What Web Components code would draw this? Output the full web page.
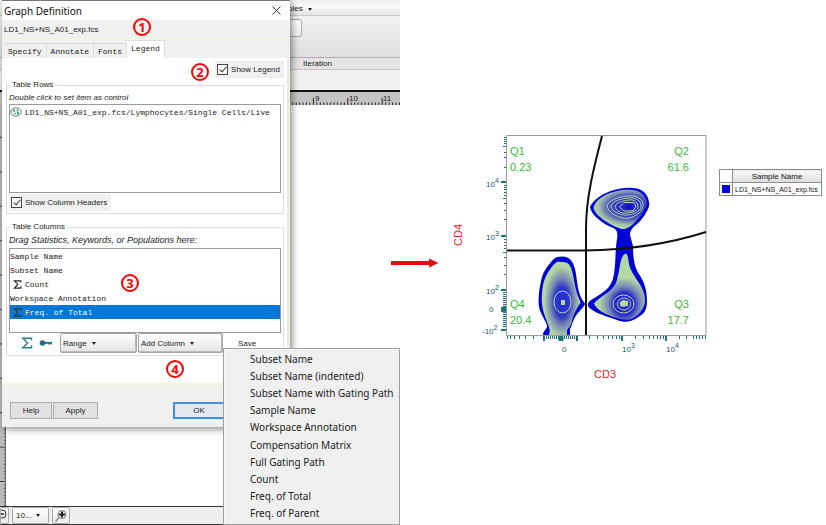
<!DOCTYPE html>
<html lang="en">
<head>
<meta charset="utf-8">
<title>Graph Definition</title>
<style>
body{margin:0;background:#fff;color:#222;font-family:"Liberation Sans",Arial,sans-serif;font-size:8px}
</style>
</head>
<body>
<legend-tutorial></legend-tutorial>
<script>
const define = (name, html, setup) => {
  const t = document.createElement('template');
  t.innerHTML = '<style>*{box-sizing:border-box}</style>' + html;
  customElements.define(name, class extends HTMLElement {
    connectedCallback() {
      if (this.shadowRoot) return;
      this.attachShadow({mode: 'open'}).append(t.content.cloneNode(true));
      if (setup) setup(this.shadowRoot, this);
    }
  });
};
const range = (n, f) => Array.from({length: n}, (_, i) => f(i));

/* Red circled step number */
define('step-badge', `<style>
:host{position:absolute;width:18px;height:18px;border:2px solid #f00;border-radius:50%;display:grid;place-items:center;color:#f00;font:bold 13px/14px "Open Sans","Noto Sans",sans-serif}
</style><slot></slot>`);

define('check-box', `<style>
:host{display:flex;background:#f0f0f0;width:max-content}
label{display:flex;align-items:center;gap:3px;padding:3px 4px 3px 2px;line-height:11px;font-size:8px}
input{appearance:none;margin:0;width:11px;height:11px;border:1px solid #444;background:#fff;display:grid;place-items:center}
input:checked::after{content:"";width:3px;height:6px;border:solid #333;border-width:0 1px 1px 0;transform:rotate(40deg);margin-bottom:2px}
</style><label><input type="checkbox" checked><slot></slot></label>`);

define('push-button', `<style>
:host{display:block}
button{width:100%;height:17px;padding:0;border:1px solid #adadad;background:#e1e1e1;font:inherit;font-size:8px;color:#222}
:host([primary]) button{border:2px solid #3b93dc;background:#e3e8ef}
</style><button type="button"><slot></slot></button>`);

define('drop-button', `<style>
:host{display:block}
button{display:flex;align-items:center;gap:5px;width:100%;height:20px;padding:0 2px;border:1px solid #a3a3a3;border-radius:2px;background:linear-gradient(#fff,#e4e4e4);box-shadow:inset -1px -1px #bbb;font:inherit;font-size:8px;color:#222}
i{border:2px solid transparent;border-top:3px solid #222;border-bottom:0}
</style><button type="button" aria-haspopup="menu"><slot></slot><i></i></button>`);

define('tab-bar', `<style>
:host{display:flex;align-items:flex-end;height:18px;padding-left:2px;background:#f0f0f0;font-family:"Liberation Mono",monospace}
button{height:15px;padding:0 4px;border:1px solid #dcdcdc;border-bottom:0;border-left:0;background:#f0f0f0;font:inherit;font-size:8px;color:#222}
button[aria-selected=true]{height:18px;padding:0 4px 2px;background:#fff}
</style>
<button role="tab" type="button">Specify</button><button role="tab" type="button">Annotate</button><button role="tab" type="button">Fonts</button><button role="tab" type="button" aria-selected="true">Legend</button>`);

define('group-box', `<style>
:host{display:block}
fieldset{min-width:0;margin:0;padding:0 2px 2px;border:1px solid #dcdcdc}
legend{margin-left:1px;padding:0 2px;line-height:12px;font-size:8px}
</style><fieldset><legend></legend><slot></slot></fieldset>`,
(r, h) => { r.querySelector('legend').textContent = h.getAttribute('heading'); });

define('item-list', `<style>
:host{display:block;border:1px solid #9a9aa2;font-family:"Liberation Mono",monospace;font-size:8px}
::slotted(div){display:flex;align-items:center;gap:3px;min-height:14px;line-height:13px;white-space:nowrap}
::slotted(.on){background:#0078d7;color:#fff}
</style><slot></slot>`);

define('context-menu', `<style>
:host{display:flex;flex-direction:column;background:#f0f0f0;border:1px solid #a0a0a0;padding:1px 0 2px;box-shadow:inset 1px 1px #f8f8f8}
button{flex:1;border:0;background:none;padding:0 0 0 26px;text-align:left;font:10px/14px "Noto Sans","Open Sans",sans-serif;color:#1a1a1a;white-space:nowrap}
</style>`, r => {
  for (const s of ['Subset Name','Subset Name (indented)','Subset Name with Gating Path','Sample Name','Workspace Annotation','Compensation Matrix','Full Gating Path','Count','Freq. of Total','Freq. of Parent']) {
    const b = document.createElement('button');
    b.type = 'button'; b.setAttribute('role', 'menuitem'); b.textContent = s; r.append(b);
  }
});

const sigma = (c, s) => `<svg width="${s}" height="${s}" viewBox="0 0 10 10" fill="none" stroke="${c}"><path d="M8.7 2.8V1H1.6L5.4 5 1.5 9H8.8V7" stroke-width="1.2"/></svg>`;

define('graph-dialog', `<style>
:host{display:flex;flex-direction:column;background:#f0f0f0;border-top:1px solid #777;box-shadow:2px 2px 7px #0007}
header{display:flex;align-items:center;justify-content:space-between;height:19px;padding:0 9px 0 2px;background:#fff;font:10px/18px "Noto Sans","Open Sans",sans-serif;color:#111}
header button{border:0;background:none;padding:0;display:flex}
h1{font:inherit;margin:0}
.file{height:20px;padding-left:2px;line-height:20px;border-bottom:1px solid #f7f7dc}
.pane{background:#fff;padding:3px 3px 0 4px;border-right:3px solid #ecece0;height:327px;border-bottom:2px solid #f5f5dc}
.show{display:flex;justify-content:flex-end}
p{margin:0;font-style:italic;line-height:13px}
p.big{font-size:9px;line-height:15px}
.rows{height:89px}
.cols{height:85px}
group-box{margin-top:1px}
group-box+group-box{margin-top:7px}
.tools{display:flex;align-items:center;height:20px;padding-left:12px}
.tools>svg{flex:none}
.tools drop-button:first-of-type{width:77px;margin-left:7px;margin-right:1px}
.tools drop-button:last-of-type{width:85px}
.key{margin-left:6px}
.save{border:0;background:none;font:inherit;padding:0;margin-left:15px;color:#222}
footer{display:flex;gap:1px;padding:17px 8px 8px}
.help{width:42px}.apply{width:45px}.ok{width:52px;margin-left:auto;margin-right:57px}
</style>
<header><h1>Graph Definition</h1><button type="button" aria-label="Close"><svg width="9" height="9" viewBox="0 0 9 9" stroke="#222" stroke-width=".9"><path d="M.5.5l8 8M8.500.5l-8 8"/></svg></button></header>
<div class="file">LD1_NS+NS_A01_exp.fcs</div>
<tab-bar role="tablist"></tab-bar>
<div class="pane">
  <div class="show"><check-box>Show Legend</check-box></div>
  <group-box heading="Table Rows">
    <p>Double click to set item as control</p>
    <item-list class="rows"><div><svg width="12" height="10" viewBox="0 0 12 10"><ellipse cx="6" cy="5" rx="5.300" ry="4.200" fill="#eef5f1" stroke="#536b64" stroke-width=".8"/><g fill="#2f9a6c"><circle cx="4" cy="3.700" r="1.100"/><circle cx="7.500" cy="3.500" r="1"/><circle cx="8" cy="6.300" r="1.200"/><circle cx="5" cy="6.500" r=".8"/></g></svg>LD1_NS+NS_A01_exp.fcs/Lymphocytes/Single Cells/Live</div></item-list>
    <check-box style="margin-top:1px">Show Column Headers</check-box>
  </group-box>
  <group-box heading="Table Columns">
    <p class="big">Drag Statistics, Keywords, or Populations here:</p>
    <item-list class="cols"><div>Sample Name</div><div>Subset Name</div><div style="padding-left:3px">${sigma('#222', 9)}Count</div><div>Workspace Annotation</div><div class="on" style="padding-left:3px">${sigma('#333', 9)}Freq. of Total</div></item-list>
    <div class="tools">${sigma('#287f8e', 12)}<svg class="key" width="14" height="8" viewBox="0 0 14 8" fill="#1f6f80"><circle cx="3.500" cy="4" r="2.800"/><path d="M5 3h8v2.500h-1.500V4.800h-1v.7H9v-.7H5z"/></svg>
      <drop-button>Range</drop-button><drop-button>Add Column</drop-button><button class="save" type="button">Save</button></div>
  </group-box>
</div>
<footer><push-button class="help">Help</push-button><push-button class="apply">Apply</push-button><push-button class="ok" primary>OK</push-button></footer>`);

/* Layout editor behind the dialog */
define('layout-editor', `<style>
:host{display:flex;flex-direction:column;background:#fff;overflow:hidden}
.bar{height:16px;padding:4px 0 0 288px;line-height:10px;background:linear-gradient(#eee,#fafafa 40%,#e6e6e6);border-bottom:1px solid #ccc;display:flex;gap:5px}
.bar i,.zoom i{border:2px solid transparent;border-top:3px solid #222;border-bottom:0;align-self:center;height:0}
.ribbon{height:42px;padding:3px 0 0 280px;background:linear-gradient(#f2f2f2,#dedede);border-bottom:1px solid #b9a9b9}
.ribbon button{display:block;width:22px;height:18px;border:1px solid #aaa;border-radius:3px;background:linear-gradient(#fff,#eee)}
.cap{height:12px;line-height:12px;padding-left:303px;background:#e4e4e4;border-bottom:1px solid #d4c0cc}
.gap{height:20px;background:#f0f0f0}
.ruler{height:15px;background:#c4c4c4;border-top:2px solid #111;overflow:hidden}
.ruler svg,.side svg{display:block}
.canvas{flex:1;display:flex;min-height:0}
.side{width:6px;background:#b9b9b9;border-right:1px solid #666;overflow:hidden}
.zoom{display:flex;gap:3px;height:19px;background:#efefef;border-top:1px solid #333;border-bottom:1px solid #333}
.zoom button,.zoom label{height:17px;border:1px solid #aaa;border-radius:2px;background:linear-gradient(#fff,#ececec);padding:0}
.out{width:9px;overflow:hidden}.in{width:18px;display:grid;place-items:center}
.zoom label{width:37px;display:flex;padding-left:3px}
select{appearance:none;border:0;background:none;width:20px;padding:0;font:inherit;font-size:8px;color:#222}
text{font:8px "Liberation Sans",sans-serif;fill:#222}
</style>
<div class="bar">ples<i></i></div>
<div class="ribbon"><button type="button" aria-label="Iteration value"></button></div>
<div class="cap">Iteration</div><div class="gap"></div>
<div class="ruler"><svg width="100%" height="13"></svg></div>
<div class="canvas"><div class="side"><svg width="6" height="401"></svg></div></div>
<div class="zoom"><button class="out" type="button" aria-label="Zoom out"><svg width="8" height="12" viewBox="0 0 8 12" fill="none" stroke="#222"><circle cx="1" cy="6" r="4"/><path d="M-1 6h4" stroke-width="1.500"/></svg></button>
<label aria-label="Zoom"><select><option>10...</option></select><i></i></label>
<button class="in" type="button" aria-label="Zoom in"><svg width="14" height="14" viewBox="0 0 14 14" fill="none" stroke="#222"><circle cx="8" cy="5.500" r="4" stroke="#777" fill="#fff"/><path d="M5 5.500h6M8 2.500v6" stroke-width="2"/><path d="M5 8.500l-3.500 4" stroke="#888" stroke-width="1.500"/></svg></button></div>`,
r => {
  const t = range(40, i => { const x = 279 + i * 3.44, m = i % 10 === 0; return `<path d="M${x} ${m ? 6 : 10.5}V13" stroke="#222"/>`; }).join('');
  r.querySelector('.ruler svg').innerHTML = t + '<text x="315" y="9">9</text><text x="349" y="9">10</text><text x="383" y="9">11</text>';
  r.querySelector('.side svg').innerHTML = range(118, i => { const y = 401 - 24.5 - (i - 7) * 3.44; return `<path d="M${(i - 7) % 10 === 0 ? 0 : 4} ${y}H6" stroke="#444"/>`; }).join('');
});

define('red-arrow', `<style>:host{display:block;flex:none}svg{display:block}</style>
<svg width="48" height="10" viewBox="0 0 48 10"><path d="M0 3h38V.5L47.500 5 38 9.500V7H0z" fill="#e80b0b"/></svg>`);

/* Contour plot CD3 x CD4 with curved quadrant gates */
define('contour-plot', `<style>
:host{display:block;flex:none}svg{display:block}
text{font-family:"Liberation Sans",sans-serif}
.q{fill:#37b837;font-size:11px}.r{text-anchor:end}
.n{fill:#0e6262;font-size:8px}.s{font-size:7px}
.a{fill:#e02a2a;font-size:11px}
</style>
<svg width="270" height="265" viewBox="445 131 270 265">
<defs>
<radialGradient id="u" gradientUnits="userSpaceOnUse" cx="0" cy="0" r="1" gradientTransform="translate(629 208) scale(36 21)">
<stop offset="0" stop-color="#0a0ad6"/><stop offset=".15" stop-color="#2222cc"/><stop offset=".4" stop-color="#3038c4"/><stop offset=".6" stop-color="#5560bb"/><stop offset=".85" stop-color="#a3c3a7"/><stop offset="1" stop-color="#b4d8a4"/></radialGradient>
<radialGradient id="l" gradientUnits="userSpaceOnUse" cx="0" cy="0" r="1" gradientTransform="translate(624 305) scale(26 28)">
<stop offset="0" stop-color="#2525cc"/><stop offset=".4" stop-color="#2929cc"/><stop offset=".6" stop-color="#7585b4"/><stop offset=".95" stop-color="#b4d8a4"/></radialGradient>
<radialGradient id="m" gradientUnits="userSpaceOnUse" cx="0" cy="0" r="1" gradientTransform="translate(562 303) scale(18 36)">
<stop offset="0" stop-color="#2525cc"/><stop offset=".42" stop-color="#3038c8"/><stop offset=".65" stop-color="#7585b4"/><stop offset="1" stop-color="#b4d8a4"/></radialGradient>
</defs>
<g fill="#0202d6">
<path d="M590 208C593 201 603 194 614 191S635 188 641 191 650 202 649 207 642 221 637 225 630 232 630 236L633 247C633 257 634 268 639 275S647 291 647 302 643 315 637 319 624 324 617 321 600 316 594 312 588 308 588 305 593 300 599 296 612 288 614 275 615 252 617 240 613 230 605 225 591 214 590 208Z"/>
<path d="M562 257.500C569 257 573 262 575 270S577 288 580 296 585 303 585 305 576 315 574 320 572 326 570 330V336H543C543 332 546 331 547 328S540 315 539 308 539 291 541 282 546 269 551 263 557 258 562 257.500Z"/>
</g>
<path fill="url(#u)" d="M594 207C597 199 608 194 617 192S636 190 641 194 648 203 646 208 638 221 632 226 623 231 616 228 591 214 594 207Z"/>
<path fill="url(#l)" d="M625 255C628 254 628 259 629 265S634 276 639 284 645 297 645 302 641 314 635 318 624 321 617 319 602 314 597 309 594 304 600 299 614 291 617 281 620 257 625 255Z"/>
<path fill="url(#m)" d="M562 263C568 263 570 265 572 272S575 289 578 297 581 303 579 306 573 316 572 322 568 328 567 332V336H549C551 331 549 328 546 320S541 305 542 294 545 277 551 269 558 263 562 263Z"/>
<g fill="none" stroke="#b4d8a4" stroke-width="1">
<path d="M607 207C608 202 617 198 627 197S643 200 643 206 637 217 629 219 607 213 607 207Z"/>
<path d="M611 207C613 202 620 200 628 199S641 202 641 207 635 215 628 216 611 212 611 207Z"/>
<path d="M615 207C617 203 623 202 629 201S638 204 638 208 633 213 627 214 615 211 615 207Z"/>
<path d="M619.500 208L624 203.500H634L636 207 633 212H624Z"/>
<ellipse cx="623.500" cy="305" rx="10.500" ry="9"/><ellipse cx="624" cy="305" rx="6.500" ry="6"/>
<ellipse cx="562.500" cy="303" rx="8.500" ry="11"/>
</g>
<path d="M620 303l3-2 5 1v5l-6 1-2-2z" fill="#b4d8a4"/><path d="M561 301h4v5h-4z" fill="#b4d8a4"/>
<path d="M506.500 136.500H706V336.500H506.500Z" fill="none" stroke="#999"/>
<g fill="none" stroke="#111" stroke-width="2"><path d="M602 137C594 168 586 198 586 230V336M507 251.500H585C625 251 665 246 706 233"/></g>
<g id="t" stroke="#1c7474"></g>
<g class="q"><text x="510" y="156">Q1</text><text x="510" y="172">0.23</text><text x="510" y="309">Q4</text><text x="510" y="325">20.4</text>
<g class="r"><text x="689" y="156">Q2</text><text x="689" y="172">61.6</text><text x="689" y="309">Q3</text><text x="689" y="325">17.7</text></g></g>
<g class="n"><text x="486" y="188">10<tspan class="s" dy="-4">4</tspan></text><text x="486" y="241">10<tspan class="s" dy="-4">3</tspan></text><text x="486" y="295">10<tspan class="s" dy="-4">2</tspan></text><text x="489" y="313">0</text><text x="482" y="335">-10<tspan class="s" dy="-4">2</tspan></text>
<text x="562" y="353">0</text><text x="622" y="353">10<tspan class="s" dy="-4">3</tspan></text><text x="666" y="353">10<tspan class="s" dy="-4">4</tspan></text></g>
<text class="a" x="594" y="379">CD3</text><text class="a" transform="translate(462 247) rotate(-90)">CD4</text>
</svg>`, r => {
  const y = (v, l, w = 1) => `<path d="M${506 - l} ${v}H506" stroke-width="${w}"/>`;
  const x = (v, l, w = 1) => `<path d="M${v} 337V${337 + l}" stroke-width="${w}"/>`;
  r.getElementById('t').innerHTML =
    [183, 237, 291, 331].map(v => y(v, 5, 2)).join('') + y(310.5, 5, 5) +
    [138, 140, 142, 144, 153, 158, 168, 186, 188, 190, 193, 196, 204, 211, 220, 240, 243, 246, 249, 258, 266, 275].map(v => y(v + .5, 2)).join('') +
    [147, 199, 253].map(v => y(v + .5, 3)).join('') + range(18, i => y(293.5 + i * 2, 3)).join('') +
    [544, 577, 622, 666].map(v => x(v, 5, 2)).join('') + x(561, 5, 5) +
    [507, 510, 514, 519, 525, 533, 589, 597, 603, 608, 612, 616, 619, 635, 643, 649, 653, 657, 660, 663, 679, 686, 693, 696, 699, 702, 705].map(v => x(v + .5, 3)).join('') +
    range(15, i => x(546.5 + i * 2, 3)).join('');
});

define('sample-legend', `<style>
:host{display:block;flex:none}
table{border-collapse:collapse;font-size:7px;color:#111}
th,td{border:1px solid #8c8c8c;height:13px;padding:0 2px;line-height:11px;white-space:nowrap}
thead th{font-size:8px;font-weight:400;background:linear-gradient(#fafafa,#ddd)}
thead td{background:#fff;width:13px}
i{display:block;width:8px;height:8px;background:#0202d6}
tbody td:last-child{width:89px}
</style><table><thead><tr><td></td><th>Sample Name</th></tr></thead><tbody><tr><td><i></i></td><td>LD1_NS+NS_A01_exp.fcs</td></tr></tbody></table>`);

define('legend-tutorial', `<style>
:host{display:grid;grid-template-columns:400fr 426fr;min-height:100vh}
.work{position:relative;display:grid}
graph-dialog{position:absolute;left:2px;top:0;width:288px}
context-menu{position:absolute;left:223px;top:348px;bottom:0;width:177px}
.result{display:flex;align-items:center;gap:6px;min-width:0}
red-arrow{margin-left:-9px;z-index:1}
sample-legend{align-self:flex-start;margin:169px 0 0 -2px}
</style>
<section class="work"><layout-editor></layout-editor><graph-dialog></graph-dialog><context-menu role="menu"></context-menu>
<step-badge style="left:133px;top:18px">1</step-badge><step-badge style="left:191px;top:63px">2</step-badge><step-badge style="left:121px;top:274px">3</step-badge><step-badge style="left:166px;top:360px">4</step-badge></section>
<section class="result"><red-arrow></red-arrow><contour-plot></contour-plot><sample-legend></sample-legend></section>`);
</script>
</body>
</html>
